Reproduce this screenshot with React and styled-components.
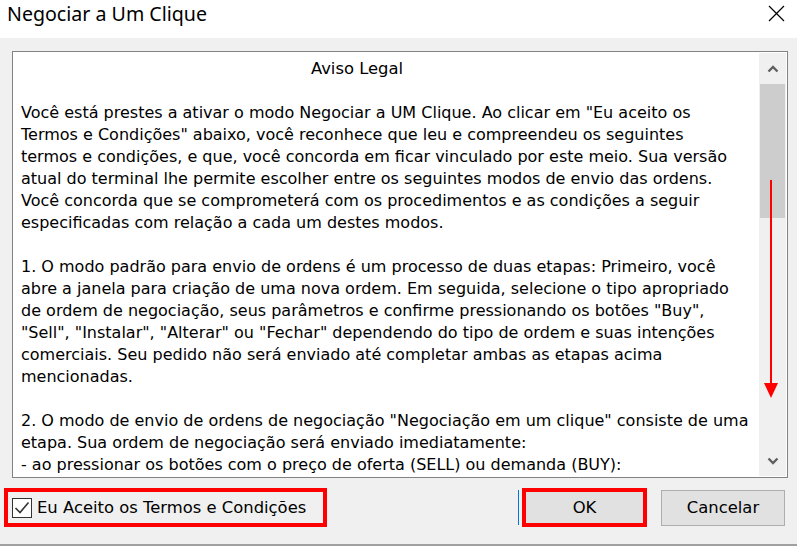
import React from 'react';
import styled, { createGlobalStyle } from 'styled-components';

const GlobalStyle = createGlobalStyle`
  html, body {
    margin: 0;
    padding: 0;
    background: #f0f0f0;
  }
  * {
    box-sizing: border-box;
  }
`;

const DialogWindow = styled.div`
  width: 797px;
  height: 546px;
  display: flex;
  flex-direction: column;
  background: #f0f0f0;
  border-bottom: 2px solid #a0a0a0;
  font-family: "DejaVu Sans", sans-serif;
  color: #000;
  overflow: hidden;
`;

const TitleBar = styled.div`
  height: 38px;
  flex: 0 0 38px;
  background: #fff;
  display: flex;
  align-items: flex-start;
  justify-content: space-between;
  padding: 0 12px 0 7px;
`;

const Title = styled.div`
  font-family: "Noto Sans", sans-serif;
  font-size: 19.6px;
  line-height: 27px;
  color: #000;
`;

const CloseButton = styled.div`
  width: 18px;
  height: 18px;
  margin-top: 4px;
  display: flex;
  align-items: center;
  justify-content: center;
`;

const Content = styled.div`
  flex: 1;
  display: flex;
  flex-direction: column;
  padding: 13px 9px 0 12px;
`;

const TextBox = styled.div`
  position: relative;
  height: 427px;
  display: flex;
  background: #fff;
  border: 1px solid #828282;
  padding: 1px;
`;

const TextArea = styled.div`
  flex: 1;
  overflow: hidden;
  padding: 5px 0 0 7px;
  font-size: 16px;
  line-height: 22px;
`;

const Heading = styled.div`
  text-align: center;
  padding-right: 66px;
  margin-bottom: 22px;
  font-size: 16.4px;
`;

const Paragraph = styled.div`
  margin-bottom: 22px;
`;

const Line = styled.div`
  white-space: pre;
`;

const ScrollBar = styled.div`
  width: 27px;
  display: flex;
  flex-direction: column;
  background: #f0f0f0;
`;

const ScrollArrow = styled.div`
  height: 31px;
  display: flex;
  align-items: center;
  justify-content: center;
`;

const Thumb = styled.div`
  height: 134px;
  margin: 0 1px;
  background: #cdcdcd;
`;

const Track = styled.div`
  flex: 1;
`;

const RedArrow = styled.svg`
  position: absolute;
  right: 8px;
  top: 128px;
`;

const Footer = styled.div`
  display: flex;
  align-items: center;
  padding: 10px 3px 0 0;
  margin-left: -8px;
`;

const Highlight = styled.div`
  border: 4px solid #ff0000;
  height: 39px;
  display: flex;
  align-items: stretch;
`;

const CheckRow = styled.label`
  display: flex;
  align-items: center;
  gap: 5px;
  padding: 0 17px 0 4px;
  font-size: 16.4px;
`;

const CheckBox = styled.span`
  width: 20px;
  height: 20px;
  border: 1px solid #333;
  background: #fff;
  display: flex;
  align-items: center;
  justify-content: center;
`;

const Spacer = styled.div`
  flex: 1;
`;

const FocusEdge = styled.div`
  width: 1px;
  height: 35px;
  background: #0078d7;
  margin-right: 3px;
`;

const Button = styled.div`
  width: ${p => p.$width}px;
  height: ${p => p.$height}px;
  background: #e1e1e1;
  border: ${p => (p.$plain ? 'none' : '1px solid #adadad')};
  display: flex;
  align-items: center;
  justify-content: center;
  font-size: 16.4px;
  margin-left: ${p => p.$gap || 0}px;
`;

const paragraphs = [
  [
    'Você está prestes a ativar o modo Negociar a UM Clique. Ao clicar em "Eu aceito os',
    'Termos e Condições" abaixo, você reconhece que leu e compreendeu os seguintes',
    'termos e condições, e que, você concorda em ficar vinculado por este meio. Sua versão',
    'atual do terminal lhe permite escolher entre os seguintes modos de envio das ordens.',
    'Você concorda que se comprometerá com os procedimentos e as condições a seguir',
    'especificadas com relação a cada um destes modos.',
  ],
  [
    '1. O modo padrão para envio de ordens é um processo de duas etapas: Primeiro, você',
    'abre a janela para criação de uma nova ordem. Em seguida, selecione o tipo apropriado',
    'de ordem de negociação, seus parâmetros e confirme pressionando os botões "Buy",',
    '"Sell", "Instalar", "Alterar" ou "Fechar" dependendo do tipo de ordem e suas intenções',
    'comerciais. Seu pedido não será enviado até completar ambas as etapas acima',
    'mencionadas.',
  ],
  [
    '2. O modo de envio de ordens de negociação "Negociação em um clique" consiste de uma',
    'etapa. Sua ordem de negociação será enviado imediatamente:',
    '- ao pressionar os botões com o preço de oferta (SELL) ou demanda (BUY):',
  ],
];

const Chevron = ({ up }) => (
  <svg width="12" height="8" viewBox="0 0 12 8">
    <path
      d={up ? 'M1.5 6.5 L6 2 L10.5 6.5' : 'M1.5 1.5 L6 6 L10.5 1.5'}
      fill="none"
      stroke="#606060"
      strokeWidth="2.4"
    />
  </svg>
);

const App = () => {
  return (
    <DialogWindow>
      <GlobalStyle />
      <TitleBar>
        <Title>Negociar a Um Clique</Title>
        <CloseButton>
          <svg width="17" height="17" viewBox="0 0 17 17">
            <path d="M1 1 L16 16 M16 1 L1 16" stroke="#000" strokeWidth="1.2" />
          </svg>
        </CloseButton>
      </TitleBar>

      <Content>
        <TextBox>
          <TextArea>
            <Heading>Aviso Legal</Heading>
            {paragraphs.map((lines, i) => (
              <Paragraph key={i}>
                {lines.map((l, j) => (
                  <Line key={j}>{l}</Line>
                ))}
              </Paragraph>
            ))}
          </TextArea>
          <ScrollBar>
            <ScrollArrow>
              <Chevron up />
            </ScrollArrow>
            <Thumb />
            <Track />
            <ScrollArrow>
              <Chevron />
            </ScrollArrow>
          </ScrollBar>
          <RedArrow width="16" height="220" viewBox="0 0 16 220">
            <line x1="8" y1="0" x2="8" y2="204" stroke="#ff0000" strokeWidth="2" />
            <polygon points="1,203 15,203 8,218" fill="#ff0000" />
          </RedArrow>
        </TextBox>

        <Footer>
          <Highlight>
            <CheckRow>
              <CheckBox>
                <svg width="16" height="14" viewBox="0 0 16 14">
                  <path d="M1.5 7 L6 11.5 L14.5 1.5" fill="none" stroke="#333" strokeWidth="1.6" />
                </svg>
              </CheckBox>
              Eu Aceito os Termos e Condições
            </CheckRow>
          </Highlight>
          <Spacer />
          <FocusEdge />
          <Highlight>
            <Button $width={117} $height={31} $plain>OK</Button>
          </Highlight>
          <Button $width={124} $height={36} $gap={14}>Cancelar</Button>
        </Footer>
      </Content>
    </DialogWindow>
  );
};

export default App;
